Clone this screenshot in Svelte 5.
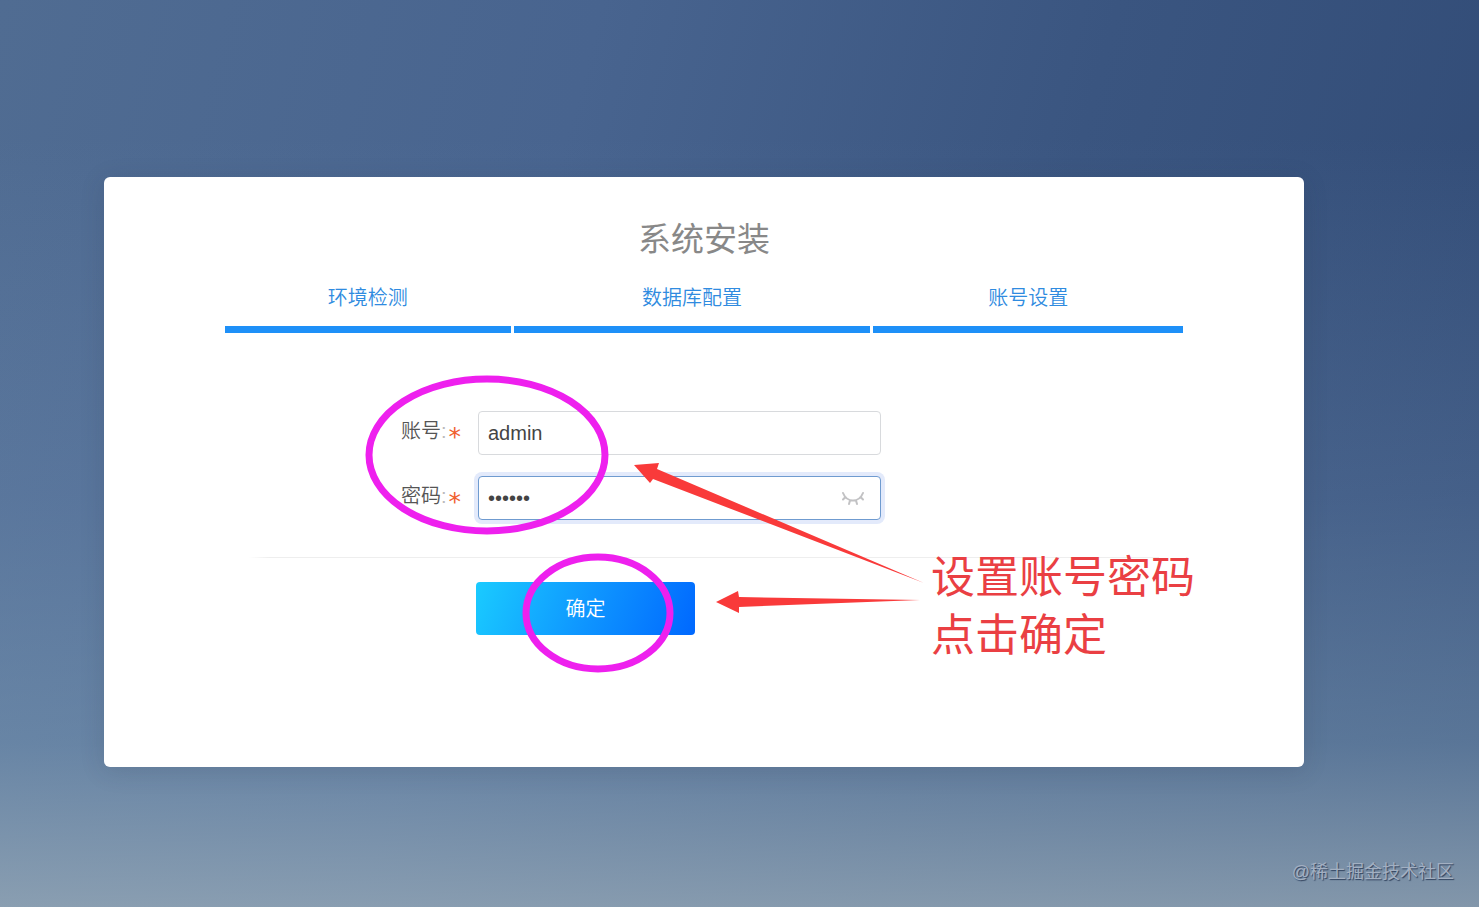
<script>
    const steps = [
        { title: '环境检测', weight: 285 },
        { title: '数据库配置', weight: 356 },
        { title: '账号设置', weight: 309 }
    ];

    let username = 'admin';
    let password = '123456';
    let showPassword = false;

    const togglePassword = () => {
        showPassword = !showPassword;
    };
</script>

<div class="page">
    <main class="card">
        <h1>系统安装</h1>

        <ol class="steps">
            {#each steps as step}
                <li style="flex-grow: {step.weight}">{step.title}</li>
            {/each}
        </ol>

        <form on:submit|preventDefault>
            <div class="form-row">
                <label for="username">账号<span class="colon">:</span><span class="required">*</span></label>
                <div class="field">
                    <input id="username" type="text" bind:value={username} />
                </div>
            </div>
            <div class="form-row">
                <label for="password">密码<span class="colon">:</span><span class="required">*</span></label>
                <div class="field active">
                    {#if showPassword}
                        <input id="password" type="text" bind:value={password} />
                    {:else}
                        <input id="password" type="password" bind:value={password} />
                    {/if}
                    <button class="eye" type="button" aria-label="显示密码" on:click={togglePassword}>
                        <svg viewBox="0 0 24 16" width="24" height="16">
                            <path d="M2 3C6 13 18 13 22 3M4.500 7 2 9.500M9 10.500 8 14M15 10.500 16 14M19.500 7 22 9.500" />
                        </svg>
                    </button>
                </div>
            </div>
            <hr />
            <button class="submit" type="submit">确定</button>
        </form>

        <!-- Hand-drawn style marks over the form -->
        <svg class="marks" viewBox="0 0 1200 590" width="1200" height="590" aria-hidden="true">
            <ellipse cx="383" cy="278" rx="118" ry="76" />
            <ellipse cx="494" cy="436" rx="72" ry="56" />
            <path d="M530 288 555 286 553 292 820 406 549 302 546 306Z" />
            <path d="M612 425 634 414 635 420 816 423 635 430 635 436Z" />
        </svg>
        <p class="note">设置账号密码<br />点击确定</p>
    </main>

    <div class="watermark">@稀土掘金技术社区</div>
</div>

<style>
    :global(body) {
        margin: 0;
    }

    .page {
        box-sizing: border-box;
        min-height: 100vh;
        padding: 177px 175px 140px 104px;
        position: relative;
        font-family: "Liberation Sans", "Noto Sans CJK SC", sans-serif;
        font-size: 20px;
        font-weight: 350;
        background:
            linear-gradient(to bottom, rgba(120, 150, 185, 0) 15%, rgba(125, 155, 190, 0.25) 55%, rgba(130, 160, 185, 0.5) 82%, rgba(158, 176, 188, 0.75) 100%),
            linear-gradient(105deg, #506c92 0%, #48648f 35%, #3a5580 65%, #304a75 100%);
    }

    .card {
        box-sizing: border-box;
        max-width: 1200px;
        padding: 38px 121px 132px;
        position: relative;
        background: #fff;
        border-radius: 6px;
        box-shadow: 0 4px 24px rgba(40, 50, 70, 0.15);
    }

    h1 {
        margin: 0;
        color: #888;
        font-size: 33px;
        font-weight: 400;
        line-height: 50px;
        text-align: center;
    }

    .steps {
        display: flex;
        gap: 3px;
        margin: 0;
        padding: 18px 0 0;
        list-style: none;
    }

    .steps li {
        flex-basis: 0;
        padding-bottom: 13px;
        border-bottom: 7px solid #1e90f8;
        color: #2f8be0;
        line-height: 30px;
        text-align: center;
    }

    form {
        padding: 78px 24px 0;
    }

    .form-row {
        display: flex;
        align-items: center;
        margin-bottom: 21px;
    }

    label {
        box-sizing: border-box;
        display: flex;
        width: 229px;
        padding: 0 0 4px 152px;
        color: #555;
        line-height: 28px;
    }

    .colon {
        color: #bbb;
    }

    .required {
        height: 28px;
        margin-left: 2px;
        color: #f0602f;
        font-family: "DejaVu Sans", sans-serif;
        font-size: 25px;
        font-weight: 400;
        line-height: 40px;
    }

    .field {
        box-sizing: border-box;
        display: flex;
        align-items: center;
        flex: 0 1 403px;
        height: 44px;
        padding: 0 15px 0 9px;
        background: #fff;
        border: 1px solid #d8dadd;
        border-radius: 4px;
    }

    .field.active {
        border-color: #6f9bd0;
        box-shadow: 0 0 0 4px #e3eafb;
    }

    input {
        flex: 1;
        min-width: 0;
        padding: 0;
        background: none;
        border: 0;
        outline: none;
        color: #444;
        font-family: "Liberation Sans", sans-serif;
        font-size: 20px;
    }

    .eye {
        display: flex;
        padding: 0;
        background: none;
        border: 0;
        cursor: pointer;
    }

    .eye path {
        fill: none;
        stroke: #c2c2c4;
        stroke-width: 2;
        stroke-linecap: round;
    }

    hr {
        height: 1px;
        margin: 37px 0 24px;
        background: linear-gradient(to right, #fff, #eee 20px);
        border: 0;
    }

    .submit {
        display: block;
        width: 219px;
        height: 53px;
        margin-left: 227px;
        padding: 0 0 3px;
        background: linear-gradient(110deg, #1acbff 0%, #0f97ff 50%, #0068ff 100%);
        border: 0;
        border-radius: 4px;
        color: #fff;
        font: inherit;
        cursor: pointer;
    }

    .marks {
        position: absolute;
        top: 0;
        left: 0;
        pointer-events: none;
    }

    .marks ellipse {
        fill: none;
        stroke: #ee20ee;
        stroke-width: 7;
    }

    .marks path {
        fill: #f93a3a;
    }

    .note {
        position: absolute;
        top: 372px;
        left: 827px;
        margin: 0;
        color: #ea3f43;
        font-size: 44px;
        font-weight: 400;
        line-height: 58px;
        white-space: nowrap;
    }

    .watermark {
        position: absolute;
        right: 25px;
        bottom: 22px;
        color: #a3b0c2;
        font-size: 18px;
        font-weight: 400;
        line-height: 26px;
        text-shadow: 1px 1px 1px #30425e;
    }
</style>
